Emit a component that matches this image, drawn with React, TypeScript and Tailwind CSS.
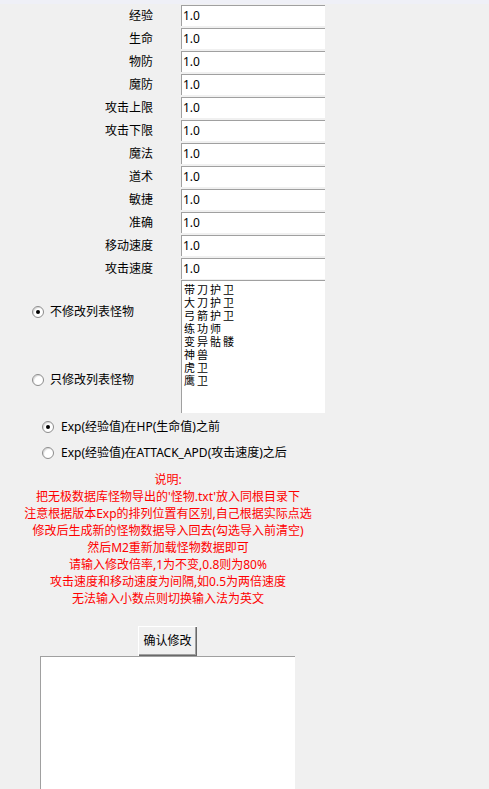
import React from 'react';

const rows = ['经验', '生命', '物防', '魔防', '攻击上限', '攻击下限', '魔法', '道术', '敏捷', '准确', '移动速度', '攻击速度'];
const monsters = ['带刀护卫', '大刀护卫', '弓箭护卫', '练功师', '变异骷髅', '神兽', '虎卫', '鹰卫'];
const notes = [
    '说明:',
    "把无极数据库怪物导出的'怪物.txt'放入同根目录下",
    '注意根据版本Exp的排列位置有区别,自己根据实际点选',
    '修改后生成新的怪物数据导入回去(勾选导入前清空)',
    '然后M2重新加载怪物数据即可',
    '请输入修改倍率,1为不变,0.8则为80%',
    '攻击速度和移动速度为间隔,如0.5为两倍速度',
    '无法输入小数点则切换输入法为英文',
];

function Radio({ checked, label, gap }: { checked: boolean; label: string; gap: string }) {
    return (
        <div className={`flex items-center h-[14px] ${gap}`}>
            <span className="w-[12px] h-[12px] rounded-full border border-[#8c8c8c] bg-white flex items-center justify-center shrink-0 shadow-[inset_1px_1px_1px_#d8d8d8]">
                {checked && <span className="w-[4px] h-[4px] rounded-full bg-black" />}
            </span>
            <span className="text-[12px] leading-[14px] text-black whitespace-nowrap">{label}</span>
        </div>
    );
}

export default function App() {
    return (
        <div
            className="w-[489px] h-[789px] bg-[#f0f0f0] overflow-hidden text-black"
            style={{ fontFamily: '"Noto Sans", "Noto Sans CJK SC", sans-serif' }}
        >
            <div className="h-[4px] bg-[#eff0f7]" />

            {/* 数值输入 */}
            <div className="mt-[1px] flex flex-col gap-[2px]">
                {rows.map((r) => (
                    <div key={r} className="flex items-center h-[21px]">
                        <span className="w-[153px] text-right text-[12px] leading-[21px]">{r}</span>
                        <div className="ml-[28px] w-[144px] h-[21px] bg-white border-t border-l border-[#a0a0a0] pl-[1px] text-[12px] leading-[20px]">
                            1.0
                        </div>
                    </div>
                ))}
            </div>

            {/* 列表怪物 */}
            <div className="mt-[1px] flex">
                <div className="w-[181px] flex flex-col pl-[32px]">
                    <div className="pt-[25px]">
                        <Radio checked label="不修改列表怪物" gap="gap-[6px]" />
                    </div>
                    <div className="mt-[54px]">
                        <Radio checked={false} label="只修改列表怪物" gap="gap-[6px]" />
                    </div>
                </div>
                <div className="w-[144px] h-[133px] bg-white border-t border-l border-[#a0a0a0] pl-[2px] pt-[2px]">
                    {monsters.map((m) => (
                        <div
                            key={m}
                            className="text-[11px] leading-[13px] h-[13px] tracking-[2px]"
                            style={{ fontFamily: '"Noto Sans CJK SC", sans-serif' }}
                        >
                            {m}
                        </div>
                    ))}
                </div>
            </div>

            {/* Exp 位置 */}
            <div className="mt-[7px] pl-[42px] flex flex-col gap-[12px]">
                <Radio checked label="Exp(经验值)在HP(生命值)之前" gap="gap-[7px]" />
                <Radio checked={false} label="Exp(经验值)在ATTACK_APD(攻击速度)之后" gap="gap-[7px]" />
            </div>

            {/* 说明 */}
            <div className="mt-[11px] w-[336px] text-center text-[12px] leading-[17px] text-[#ff0000]">
                {notes.map((n) => (
                    <div key={n} className="whitespace-nowrap">{n}</div>
                ))}
            </div>

            <div className="mt-[19px] ml-[138px]">
                <button className="w-[59px] h-[30px] bg-[#f0f0f0] text-[12px] text-black shadow-[inset_1px_1px_#ffffff,inset_-1px_-1px_#696969,inset_-2px_-2px_#a0a0a0]">
                    确认修改
                </button>
            </div>

            <div className="ml-[40px] w-[255px] h-[140px] bg-white border-t border-l border-[#a0a0a0]" />
        </div>
    );
}
